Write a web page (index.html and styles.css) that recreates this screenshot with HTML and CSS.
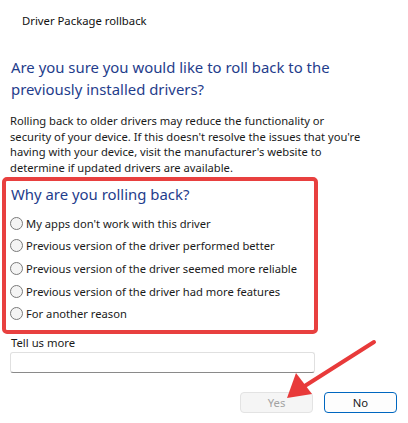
FILE: index.html
```html
<!DOCTYPE html>
<html lang="en">
<head>
    <meta charset="UTF-8">
    <title>Driver Package rollback</title>
    <link rel="stylesheet" href="styles.css">
</head>
<body>
    <!-- Dialog window -->
    <div class="dialog">
        <div class="title">Driver Package rollback</div>

        <h1 class="heading">Are you sure you would like to roll back to the previously installed drivers?</h1>

        <p class="desc">Rolling back to older drivers may reduce the functionality or security of your device. If this doesn't resolve the issues that you're having with your device, visit the manufacturer's website to determine if updated drivers are available.</p>

        <!-- Reasons (highlighted) -->
        <div class="reasons">
            <h2 class="reasons-title">Why are you rolling back?</h2>
            <label class="option"><span class="radio"></span>My apps don't work with this driver</label>
            <label class="option"><span class="radio"></span>Previous version of the driver performed better</label>
            <label class="option"><span class="radio"></span>Previous version of the driver seemed more reliable</label>
            <label class="option"><span class="radio"></span>Previous version of the driver had more features</label>
            <label class="option"><span class="radio"></span>For another reason</label>
        </div>

        <div class="more-label">Tell us more</div>
        <div class="more-input"></div>

        <div class="buttons">
            <button class="btn btn-disabled">Yes</button>
            <button class="btn btn-default">No</button>
        </div>

        <!-- Annotation arrow -->
        <svg class="arrow" width="408" height="423" viewBox="0 0 408 423">
            <line x1="374" y1="342" x2="300" y2="389" stroke="#e83a3a" stroke-width="4" stroke-linecap="round"/>
            <polygon points="287,398 296,373 312,394" fill="#e83a3a"/>
        </svg>
    </div>
</body>
</html>
```

FILE: styles.css
```css
/* General */
body {
    margin: 0;
    padding: 0;
    background-color: #fff;
    font-family: 'Noto Sans', 'Open Sans', sans-serif;
    color: #1a1a1a;
}

.dialog {
    position: relative;
    width: 408px;
    height: 423px;
    box-sizing: border-box;
    padding: 0 10px;
    background-color: #fff;
    overflow: hidden;
}

/* Title bar */
.title {
    padding: 13px 0 0 12px;
    font-size: 11.3px;
    line-height: 16px;
    color: #111;
}

/* Heading */
.heading {
    margin: 27px 0 0 1px;
    font-size: 14.9px;
    font-weight: normal;
    line-height: 22px;
    color: #1f3d8c;
}

.desc {
    width: 354px;
    margin: 13px 0 0 0;
    font-size: 11.2px;
    line-height: 15.7px;
    color: #1a1a1a;
}

/* Reasons box */
.reasons {
    margin: 1px 0 0 -8px;
    width: 316px;
    box-sizing: border-box;
    border: 4px solid #e8403f;
    border-radius: 5px;
    padding: 2px 4px 5px 4px;
}
.reasons-title {
    margin: 0 0 7px 1px;
    font-size: 14.9px;
    font-weight: normal;
    line-height: 22px;
    color: #1f3d8c;
}
.option {
    display: flex;
    align-items: center;
    height: 22.7px;
    font-size: 11.2px;
    color: #1a1a1a;
    white-space: nowrap;
}
.radio {
    width: 11px;
    height: 11px;
    border: 1px solid #7a7a7a;
    border-radius: 50%;
    margin-right: 3px;
    background-color: #f4f4f4;
    flex-shrink: 0;
}

/* Tell us more */
.more-label {
    margin: 1px 0 0 1px;
    font-size: 11.3px;
    line-height: 16px;
}
.more-input {
    margin-top: 1px;
    width: 305px;
    height: 21px;
    box-sizing: border-box;
    border: 1px solid #e0e0e0;
    border-bottom: 1px solid #8a8a8a;
    border-radius: 3px;
}

/* Buttons */
.buttons {
    display: flex;
    justify-content: flex-end;
    gap: 11px;
    margin-top: 19px;
    padding-right: 1px;
}
.btn {
    width: 73px;
    height: 21px;
    font-family: inherit;
    font-size: 11.3px;
    border-radius: 4px;
    padding: 0;
}
.btn-disabled {
    background-color: #f5f5f5;
    border: 1px solid #e3e3e3;
    color: #a3a3a3;
}
.btn-default {
    background-color: #fdfdfd;
    border: 1px solid #0067c0;
    color: #1a1a1a;
}

/* Annotation */
.arrow {
    position: absolute;
    left: 0;
    top: 0;
}
```
